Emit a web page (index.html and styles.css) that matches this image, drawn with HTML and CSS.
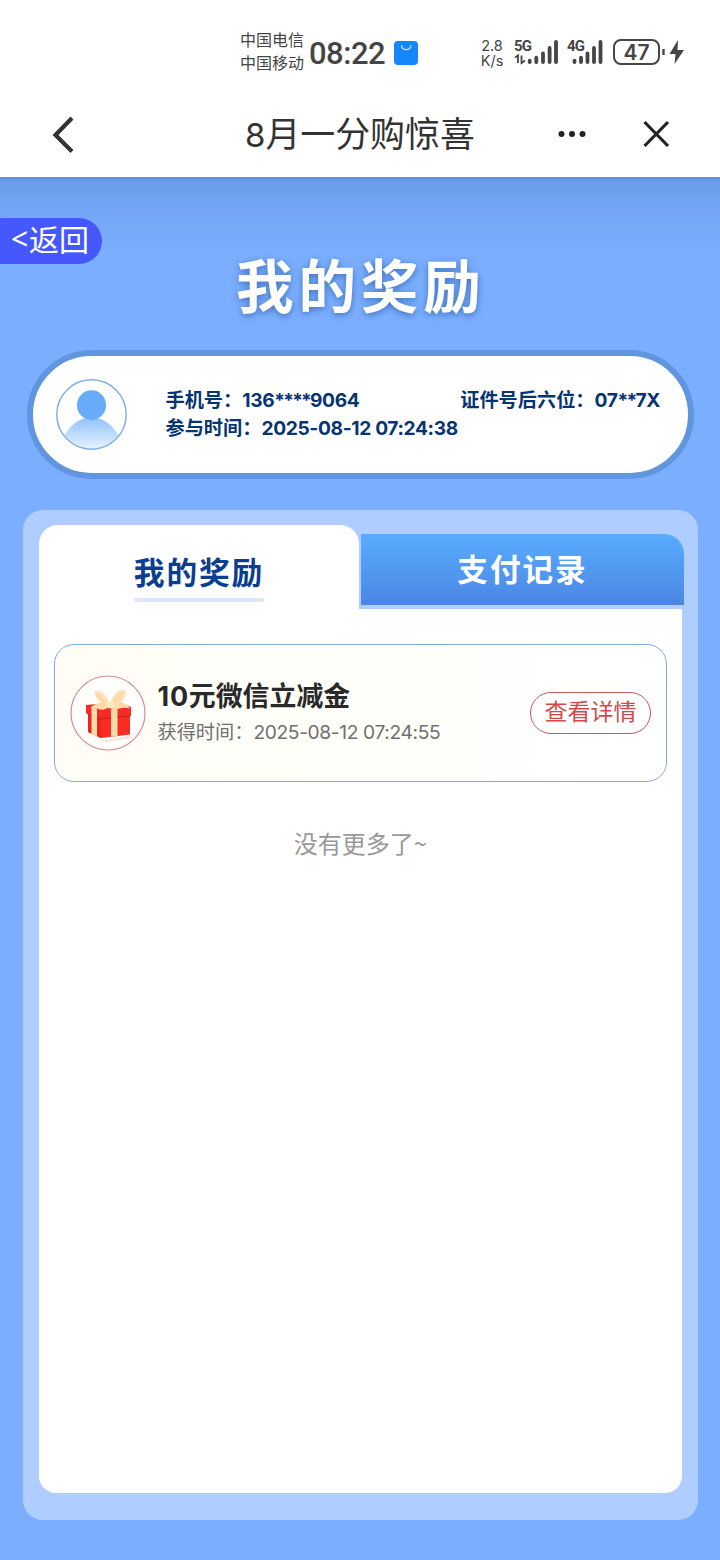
FILE: index.html
```html
<!DOCTYPE html>
<html lang="zh-CN">
<head>
<meta charset="utf-8">
<title>8月一分购惊喜</title>
<link rel="stylesheet" href="styles.css">
</head>
<body>
<header class="top">
  <div class="status">
    <div class="carriers"><span>中国电信</span><span>中国移动</span></div>
    <div class="clock">08:22</div>
    <svg class="bag" width="24" height="24" viewBox="0 0 24 24"><rect width="24" height="24" rx="4" fill="#1687fb"/><path d="M7.500 4.500c.5 5.500 9 5.500 9.500 0" fill="none" stroke="#c9eaff" stroke-width="1.200" stroke-linecap="round"/></svg>
    <div class="speed"><span>2.8</span><span>K/s</span></div>
    <div class="signal s5"><span class="gen">5G</span>
      <svg width="46" height="26" viewBox="0 0 46 26"><g fill="none" stroke="#454545" stroke-width="3.800" stroke-linecap="round"><path d="M15.700 21.700V23M22.300 18.700V23M29 14.500V23M35.600 9V23M42 3V23"/></g><path d="M1 18.500 4 16.500V24M7.500 16.500V24L11 21.500" fill="none" stroke="#454545" stroke-width="1.800"/></svg>
    </div>
    <div class="signal s4"><span class="gen">4G</span>
      <svg width="38" height="26" viewBox="0 0 38 26"><g fill="none" stroke="#454545" stroke-width="3.800" stroke-linecap="round"><path d="M7.500 21.700V23M14 18.700V23M20.500 14.500V23M27 9V23M33.500 3V23"/></g></svg>
    </div>
    <div class="battery">47</div>
    <svg class="power" width="26" height="26" viewBox="0 0 26 26"><path d="M2.500 10v6" stroke="#454545" stroke-width="2.400"/><path d="M17 1 8.500 15h6L13.500 25 23 11h-6.500z" fill="#454545"/></svg>
  </div>
  <nav class="nav">
    <svg class="back" width="28" height="38" viewBox="0 0 28 38"><path d="M24 3 7.500 20 24 36.500" fill="none" stroke="#333" stroke-width="4.200"/></svg>
    <h1 class="nav-title"><span class="num">8</span>月一分购惊喜</h1>
    <svg class="dots" width="30" height="10" viewBox="0 0 30 10" fill="#222"><circle cx="4.500" cy="5" r="3"/><circle cx="15" cy="5" r="3"/><circle cx="25.500" cy="5" r="3"/></svg>
    <svg class="close" width="28" height="28" viewBox="0 0 28 28"><path d="M2.500 2 26 26M26 2 2.500 26" stroke="#222" stroke-width="3.200"/></svg>
  </nav>
</header>
<main class="page">
  <a class="return"><span class="lt">&lt;</span>返回</a>
  <h2 class="title">我的奖励</h2>
  <section class="profile">
    <svg class="avatar" width="71" height="71" viewBox="0 0 72 72">
      <defs><linearGradient id="body" x1="0" y1="0" x2="0" y2="1"><stop offset="0" stop-color="#8fc1fb"/><stop offset="1" stop-color="#ebf5ff"/></linearGradient><clipPath id="ring"><circle cx="36" cy="36" r="34.500"/></clipPath></defs>
      <g clip-path="url(#ring)"><path d="M6 62Q17 39 36 39T66 62V72H6z" fill="url(#body)"/></g>
      <ellipse cx="36" cy="26.500" rx="14.800" ry="15" fill="#66acfb"/>
      <circle cx="36" cy="36" r="35.200" fill="none" stroke="#7fb0e2" stroke-width="1.500"/>
    </svg>
    <div class="info">
      <div class="row"><p>手机号：<span class="num phone">136<span class="stars">****</span>9064</span></p><p>证件号后六位：<span class="num idno">07<span class="stars">**</span>7X</span></p></div>
      <div class="row"><p>参与时间：<span class="num joined">2025-08-12 07:24:38</span></p></div>
    </div>
  </section>
  <section class="panel">
    <div class="tabs">
      <div class="tab active"><span class="tab-label">我的奖励</span></div>
      <div class="tab other">支付记录</div>
    </div>
    <div class="content">
      <article class="reward">
        <svg class="gift" width="76" height="76" viewBox="0 0 76 76">
          <circle cx="38" cy="38" r="37" fill="#fffefc" stroke="#d58e96" stroke-width="1.200"/>
          <path d="M17 60 34 65 60 61 63 63 36 67z" fill="#f8e5df"/>
          <path d="M18 36 60 36V59.500L31 63 18 57z" fill="#fa2b23"/>
          <path d="M18 38 31 42V63L18 57z" fill="#ec241e"/>
          <path d="M16 30 49 27 61 32V41L31 44 16 38z" fill="#f52b27"/>
          <path d="M17 38.500 31 44 60 41" stroke="#c91d1d" stroke-width="1" fill="none"/>
          <path d="M21.500 31 27 34V61.500L21.500 59zM41 34h6.500v27l-6.500 .8z" fill="#ffdba9"/>
          <path d="M38 31C31 29 23 21 25 16 32 14 38 23 40 29 43 20 49 13 55 15 58 21 52 28 44 31z" fill="#ffe0b0"/>
          <path d="M38 30C33 27 29 23 27 19M43 29C46 24 50 20 53 18" stroke="#f5cc96" fill="none"/>
          <path d="M39 29C32 26 23 29 21 33 29 32 31 38 39 32 47 38 51 30 60 34 58 27 47 26 39 29z" fill="#ffdca7"/>
          <ellipse cx="40.500" cy="30" rx="4" ry="3.500" fill="#ffe9c0"/>
        </svg>
        <div class="detail"><h3><span class="num">10</span>元微信立减金</h3><p>获得时间：<span class="num earned">2025-08-12 07:24:55</span></p></div>
        <button class="view">查看详情</button>
      </article>
      <p class="end">没有更多了<span class="tilde">~</span></p>
    </div>
  </section>
</main>
</body>
</html>
```

FILE: styles.css
```css
* { box-sizing: border-box; margin: 0; padding: 0; }
body { width: 720px; height: 1560px; overflow: hidden; background: #7baeff; color: #333; font-family: "Noto Sans CJK SC", sans-serif; white-space: nowrap; }
.num, .speed { font-family: Inter, "Noto Sans CJK SC", sans-serif; }
svg { display: block; flex: none; }
.top { height: 177px; background: #fff; }
.status { display: flex; height: 90px; padding: 29px 0 0 240px; color: #454545; }
.carriers { display: flex; flex-direction: column; width: 69px; margin-top: -1px; font-size: 16px; line-height: 23px; }
.clock { width: 85px; font: 500 31px/50px Roboto, sans-serif; letter-spacing: -.5px; }
.bag { margin-top: 12px; }
.speed { display: flex; flex-direction: column; width: 35px; margin: 9px 0 0 61px; font-size: 14.500px; line-height: 15px; }
.speed span { height: 15px; text-align: center; width: 26px; }
.signal { position: relative; height: 26px; margin-top: 10px; }
.s5 { width: 53px; }
.s4 { width: 46px; }
.gen { position: absolute; left: 0; top: -1px; font: 700 15px/16px "Roboto", sans-serif; letter-spacing: -.8px; }
.battery { width: 47px; height: 26px; margin-top: 10px; border: 2px solid #454545; border-radius: 8px; text-align: center; font: 600 21px/23px Inter, sans-serif; }
.power { margin: 10px 0 0 1px; }
.nav { display: flex; align-items: center; height: 87px; padding-left: 48px; color: #333; }
.nav-title { width: 312px; margin-left: 169px; font-weight: 400; font-size: 34.900px; line-height: 50px; }
.nav-title .num { font-size: 33px; }
.close { margin-left: 55px; }
.page { height: 1383px; padding-top: 41px; background: linear-gradient(#6b9be6, #72a4f2 24px, #7baeff 75px); box-shadow: inset 0 6px 5px -4px #5d8fd9; }
.return { display: flex; width: 102px; height: 46px; padding-left: 11px; border-radius: 0 23px 23px 0; background: #4458fd; color: #fff; font-size: 30px; line-height: 41px; }
.lt { width: 18px; font-family: "Noto Sans"; }
.title { height: 86px; margin-left: 236px; color: #fff; font-size: 57.600px; line-height: 38px; letter-spacing: 4.800px; text-shadow: 0 2px 7px #3d72bb; }
.profile { display: flex; width: 667px; height: 129px; margin-left: 27px; padding: 23px 28px 0 23px; border: 6px solid #6196df; border-radius: 65px; background: #fff; }
.info { flex: 1; margin-left: 38.500px; padding-top: 6px; color: #073572; font-weight: 700; font-size: 19.200px; line-height: 28px; }
.row { display: flex; justify-content: space-between; height: 28px; }
.info .num { letter-spacing: -.360px; }
.info .stars { letter-spacing: -1.800px; }
.panel { width: 675px; height: 1010px; margin: 31px 0 0 23px; padding: 15px 14px 0 16px; border-radius: 20px; background: #afceff; }
.tabs { display: flex; height: 84px; gap: 2px; }
.tab { font-weight: 700; font-size: 30.700px; letter-spacing: 1.900px; }
.active { display: flex; justify-content: center; width: 320px; border-radius: 19px 19px 0 0; background: #fff; color: #0b3e8f; }
.tab-label { height: 77px; padding-top: 23px; line-height: 46px; border-bottom: 4px solid #dbe8fb; border-radius: 2px; }
.other { width: 323px; height: 71px; margin-top: 9px; border-radius: 0 20px 0 0; background: linear-gradient(#59acff, #4a86e4); color: #fff; text-align: center; line-height: 68px; }
.content { width: 643px; height: 884px; padding: 35px 15px 0; border-radius: 0 0 17px 17px; background: #fff; }
.reward { display: flex; height: 138px; padding: 29.500px 15px 0 14.500px; border: 1px solid #82afd9; border-radius: 20px; background: linear-gradient(90deg, #fffdf5, #fff); }
.detail { flex: 1; margin-left: 12px; }
.detail h3 { height: 39px; font-size: 26.900px; line-height: 39px; color: #292929; }
.detail h3 .num { letter-spacing: .8px; }
.detail p { color: #707070; font-size: 19.200px; line-height: 35px; }
.earned { letter-spacing: -.370px; }
.view { display: block; width: 121px; height: 42px; margin-top: 17.500px; padding-bottom: 5px; border: 1px solid #c6595c; border-radius: 21px; background: #fff; color: #d3484a; font: 400 23px/35px "Noto Sans CJK SC", sans-serif; }
.end { margin-top: 43px; text-align: center; color: #999; font-size: 24px; line-height: 36px; }
.tilde { font-family: "Noto Sans CJK SC", sans-serif; }
```
